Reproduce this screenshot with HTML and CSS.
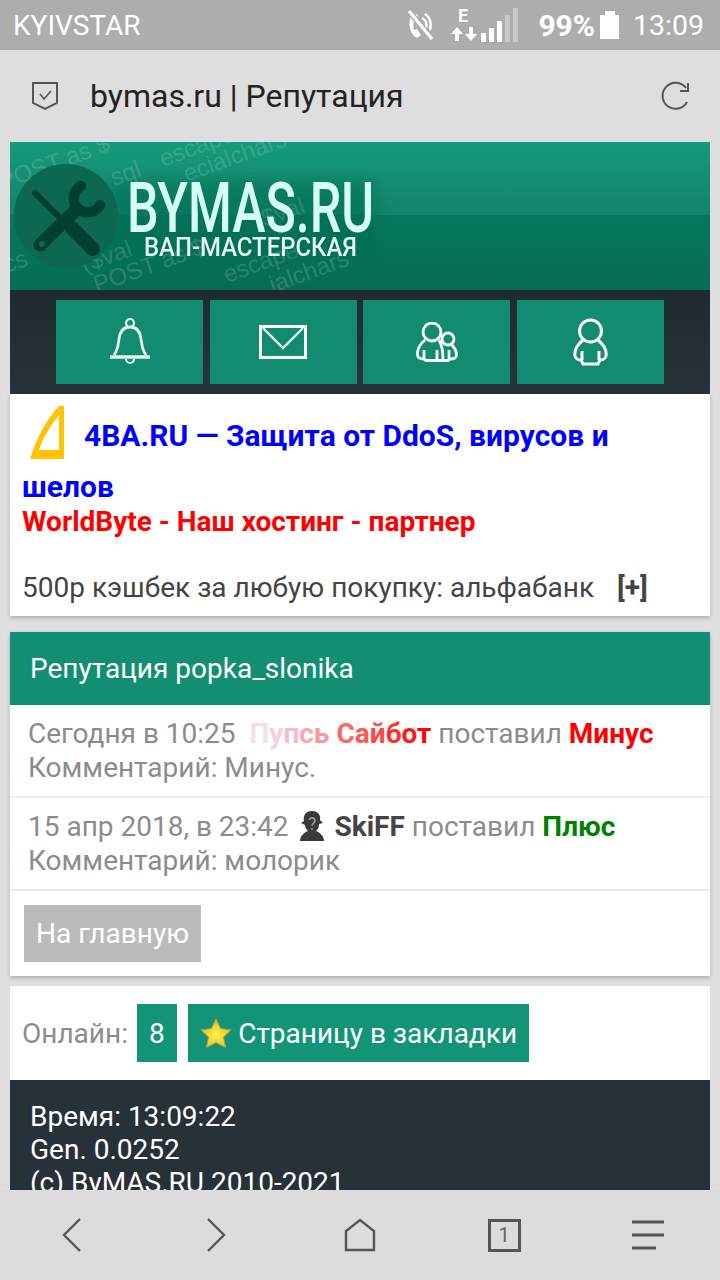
FILE: index.html
```html
<!DOCTYPE html>
<html lang="en">

<head>
    <meta charset="UTF-8">
    <meta name="viewport" content="width=device-width, initial-scale=1.0">
    <title>bymas.ru | Репутация</title>
    <link rel="stylesheet" href="styles.css">
</head>

<body>
    <div id="app">
        <div id="statusbar">
            <div class="carrier">KYIVSTAR</div>
            <div class="status-right">
                <svg class="st-mute" width="30" height="32" viewBox="0 0 30 32">
                    <path d="M8 5 C3 9 3 20 9 27 L12 29 L16 26 L12 20 L9 21 C8 18 8 14 9 12 L12 12 L13 6 L9 4 Z" fill="#fff"/>
                    <path d="M17 9 C21 11 22 15 21 19 M20 5 C25 8 27 15 25 21" fill="none" stroke="#fff" stroke-width="2.5"/>
                    <path d="M4 2 L27 30" stroke="#adadad" stroke-width="6"/>
                    <path d="M4 2 L27 30" stroke="#fff" stroke-width="3"/>
                </svg>
                <svg class="st-signal" width="68" height="36" viewBox="0 0 68 36">
                    <text x="8" y="15" class="st-e">E</text>
                    <path d="M7 20 L1 27 H5 V34 H9 V27 H13 Z M21 34 L15 27 H19 V20 H23 V27 H27 Z" fill="#fff"/>
                    <rect x="31" y="26" width="5" height="9" fill="#fff"/>
                    <rect x="39" y="21" width="5" height="14" fill="#fff"/>
                    <rect x="47" y="14" width="5" height="21" fill="#fff"/>
                    <rect x="55" y="8" width="5" height="27" fill="#c8c8c8"/>
                    <rect x="63" y="1" width="5" height="34" fill="#c8c8c8"/>
                </svg>
                <div class="battery-pct">99%</div>
                <div class="battery"><div class="battery-cap"></div><div class="battery-body"></div></div>
                <div class="clock">13:09</div>
            </div>
        </div>

        <div id="toolbar">
            <svg width="28" height="30" viewBox="0 0 28 30">
                <path d="M2 2 H26 V22 L14 28 L2 22 Z" fill="none" stroke="#555" stroke-width="2"/>
                <path d="M9 13 L13 18 L20 10" fill="none" stroke="#555" stroke-width="1.6"/>
            </svg>
            <div class="page-title">bymas.ru | Репутация</div>
            <svg width="32" height="32" viewBox="0 0 32 32">
                <path d="M27 22 A13 13 0 1 1 26 8" fill="none" stroke="#555" stroke-width="2"/>
                <path d="M28 3 V11 H20" fill="none" stroke="#555" stroke-width="2"/>
            </svg>
        </div>

        <div id="content">
            <svg class="logo" width="700" height="148" viewBox="0 0 700 148">
                <defs>
                    <linearGradient id="logobg" x1="0" y1="0" x2="0" y2="1">
                        <stop offset="0" stop-color="#169a7a"/>
                        <stop offset="0.49" stop-color="#13836c"/>
                        <stop offset="0.49" stop-color="#06785d"/>
                        <stop offset="1" stop-color="#066d55"/>
                    </linearGradient>
                    <filter id="soft"><feGaussianBlur stdDeviation="0.6"/></filter>
                    <filter id="shade"><feGaussianBlur stdDeviation="8"/></filter>
                </defs>
                <rect width="700" height="148" fill="url(#logobg)"/>
                <rect x="100" y="38" width="265" height="78" fill="#066d55" opacity="0.55" filter="url(#shade)"/>
                <g class="logo-mark" filter="url(#soft)">
                    <text transform="translate(-8 48) rotate(-20)">POST as $</text>
                    <text transform="translate(153 25) rotate(-20)">escape</text>
                    <text transform="translate(177 40) rotate(-20)">ecialchars</text>
                    <text transform="translate(104 44) rotate(-20)">sql</text>
                    <text transform="translate(75 131) rotate(-20)">($val</text>
                    <text transform="translate(87 151) rotate(-20)">POST as $</text>
                    <text transform="translate(217 141) rotate(-20)">escape</text>
                    <text transform="translate(263 151) rotate(-20)">ialchars</text>
                    <text transform="translate(-3 131) rotate(-20)">cs</text>
                    <text transform="translate(255 85) rotate(-20)">$val</text>
                </g>
                <g filter="url(#soft)">
                    <circle cx="56" cy="74" r="52" fill="#0b6751"/>
                    <path d="M25 51 L62 88" stroke="#063f30" stroke-width="6" stroke-linecap="round"/>
                    <path d="M62 86 L83 107" stroke="#063f30" stroke-width="14" stroke-linecap="round"/>
                    <path d="M30 103 L66 68" stroke="#063f30" stroke-width="13" stroke-linecap="round"/>
                    <path d="M71 44 A14 14 0 1 0 90 63" fill="none" stroke="#063f30" stroke-width="10" stroke-linecap="round"/>
                    <circle cx="32" cy="102" r="3" fill="#0b6751"/>
                    <text class="logo-title" x="117" y="90" textLength="247" lengthAdjust="spacingAndGlyphs">BYMAS.RU</text>
                    <text class="logo-sub" x="134" y="114" textLength="213" lengthAdjust="spacingAndGlyphs">ВАП-МАСТЕРСКАЯ</text>
                </g>
            </svg>

            <div class="top-nav">
                <div class="top-nav-btn">
                    <svg width="40" height="48" viewBox="0 0 40 48">
                        <g fill="none" stroke="#e8f3ef">
                            <circle cx="20" cy="5" r="4" stroke-width="2.200"/>
                            <path d="M4 37 C8 32 8 27 9 21 C10 13 14 9 20 9 C26 9 30 13 31 21 C32 27 32 32 36 37" stroke-width="2.800"/>
                            <path d="M0 39 H40" stroke-width="3.500"/>
                            <path d="M16 41 A4 4 0 0 0 24 41" stroke-width="2.200"/>
                        </g>
                    </svg>
                </div>
                <div class="top-nav-btn">
                    <svg width="48" height="34" viewBox="0 0 48 34">
                        <rect x="1.500" y="1.500" width="45" height="31" fill="none" stroke="#fff" stroke-width="3"/>
                        <path d="M4 3 L24 23 L44 3" fill="none" stroke="#e8f3ef" stroke-width="2.400"/>
                    </svg>
                </div>
                <div class="top-nav-btn">
                    <svg width="42" height="40" viewBox="0 0 42 40">
                        <g fill="none" stroke="#fff" stroke-width="2.800">
                            <circle cx="16" cy="10" r="9"/>
                            <circle cx="32" cy="17" r="6"/>
                            <path d="M9 18 C4 22 1 27 1.500 33 C2 36 5 37 8 37 L10 38.500 H32 L34 37 C38 37 41 36 40.500 32 C40 28 38 25 36 23"/>
                            <path d="M23 18 C26 23 27 27 27 37"/>
                            <path d="M8 28 V37 M21 28 V37 M33 28 V37"/>
                        </g>
                    </svg>
                </div>
                <div class="top-nav-btn">
                    <svg width="35" height="48" viewBox="0 0 35 48">
                        <g fill="none" stroke="#fff" stroke-width="3">
                            <circle cx="17.500" cy="13" r="11"/>
                            <path d="M10 22 C4 27 1 32 2 38 C3 42 6 42 8 42 L10 46 H25 L27 42 C29 42 32 42 33 38 C34 32 31 27 25 22"/>
                            <path d="M9 33 V42 M26 33 V42"/>
                        </g>
                    </svg>
                </div>
            </div>

            <div class="card ad-card">
                <div class="ad-line ad-blue">
                    <svg class="ad-logo" width="34" height="53" viewBox="0 0 34 53">
                        <path d="M29 0 H34 V53 H0 C6 34 15 15 29 0 Z M29 9 C20 20 13 32 9 44 H29 Z" fill="#ffc400" fill-rule="evenodd"/>
                    </svg>4BA.RU — Защита от DdoS, вирусов и шелов
                </div>
                <div class="ad-line ad-red">WorldByte - Наш хостинг - партнер</div>
                <div class="ad-cashback">
                    <span>500р кэшбек за любую покупку: альфабанк</span>
                    <b class="ad-more">[+]</b>
                </div>
            </div>

            <div class="card rep-card">
                <div class="rep-title">Репутация popka_slonika</div>
                <div class="rep-row">
                    Сегодня в 10:25 &nbsp;<b class="nick-fade"><span class="c1">П</span><span class="c2">у</span><span class="c3">п</span><span class="c4">с</span><span class="c5">ь</span> <span class="c6">С</span><span class="c7">а</span><span class="c8">й</span><span class="c9">б</span><span class="c10">о</span><span class="c11">т</span></b> поставил <b class="minus">Минус</b><br>
                    Комментарий: Минус.
                </div>
                <div class="rep-row">
                    15 апр 2018, в 23:42
                    <svg class="avatar" width="32" height="32" viewBox="0 0 30 32">
                        <path d="M15 1 C8 1 6 6 7 11 L4 13 L8 15 C8 18 10 20 11 21 C6 23 3 27 3 31 H27 C27 27 24 23 19 21 C21 19 22 17 22 14 L26 13 L23 10 C24 5 21 1 15 1 Z" fill="#3a3a3a"/>
                        <path d="M12 10 C13 7 18 7 18 11 C18 13 15 13 15 16 M15 18 V20" fill="none" stroke="#999" stroke-width="1.600"/>
                    </svg>
                    <b class="nick">SkiFF</b> поставил <b class="plus">Плюс</b><br>
                    Комментарий: молорик
                </div>
                <div class="rep-actions"><div class="btn-grey">На главную</div></div>
            </div>

            <div class="card online-card">
                <span class="online-label">Онлайн:</span>
                <div class="btn-green">8</div>
                <div class="btn-green">
                    <svg width="32" height="30" viewBox="0 0 32 30">
                        <defs>
                            <radialGradient id="star" cx="0.5" cy="0.55" r="0.55">
                                <stop offset="0" stop-color="#fff24a"/>
                                <stop offset="1" stop-color="#e3bd1c"/>
                            </radialGradient>
                        </defs>
                        <path d="M16 1 L20.500 10.500 L31 12 L23.500 19 L25.500 29.500 L16 24.500 L6.500 29.500 L8.500 19 L1 12 L11.500 10.500 Z" fill="url(#star)" stroke="#a8a055" stroke-width="1"/>
                    </svg>
                    Страницу в закладки
                </div>
            </div>

            <div class="footer">
                Время: 13:09:22<br>
                Gen. 0.0252<br>
                (c) ByMAS.RU 2010-2021
            </div>
        </div>

        <div id="bottombar">
            <div class="bottom-item"><svg width="24" height="36" viewBox="0 0 24 36"><path d="M20 2 L4 18 L20 34" fill="none" stroke="#555" stroke-width="2.400"/></svg></div>
            <div class="bottom-item"><svg width="24" height="36" viewBox="0 0 24 36"><path d="M4 2 L20 18 L4 34" fill="none" stroke="#555" stroke-width="2.400"/></svg></div>
            <div class="bottom-item"><svg width="32" height="34" viewBox="0 0 32 34"><path d="M2 32 V13 L16 2 L30 13 V32 Z" fill="none" stroke="#555" stroke-width="2.400"/></svg></div>
            <div class="bottom-item"><div class="tab-count">1</div></div>
            <div class="bottom-item">
                <svg width="34" height="32" viewBox="0 0 34 32">
                    <path d="M1 3 H33 M1 16 H33 M1 29 H25" stroke="#555" stroke-width="3"/>
                </svg>
            </div>
        </div>
    </div>
</body>

</html>
```

FILE: styles.css
```css
body,
html {
    margin: 0;
    padding: 0;
    height: 100%;
    overflow: hidden;
    font-family: Roboto, Arial, sans-serif;
}

#app {
    display: flex;
    flex-direction: column;
    height: 100%;
    background-color: #dfdfdf;
}

#statusbar {
    height: 50px;
    flex: none;
    background-color: #adadad;
    color: #fff;
    display: flex;
    justify-content: space-between;
    align-items: center;
    padding: 0 16px 0 13px;
    font-size: 28px;
}

.status-right {
    display: flex;
    align-items: center;
}

.st-mute {
    margin-right: 15px;
}

.st-signal {
    margin-right: 20px;
}

.st-e {
    font-size: 18px;
    font-weight: 700;
    fill: #fff;
}

.battery-pct {
    font-size: 30px;
    font-weight: 700;
}

.battery {
    margin: 0 14px 0 5px;
    display: flex;
    flex-direction: column;
    align-items: center;
}

.battery-cap {
    width: 10px;
    height: 4px;
    background-color: #fff;
}

.battery-body {
    width: 19px;
    height: 24px;
    background-color: #fff;
}

.clock {
    font-size: 28.5px;
}

#toolbar {
    height: 92px;
    flex: none;
    background-color: #dedede;
    display: flex;
    align-items: center;
    padding: 0 28px 0 31px;
    box-sizing: border-box;
}

.page-title {
    flex-grow: 1;
    margin-left: 31px;
    font-size: 32px;
    color: #222;
}

#content {
    flex-grow: 1;
    min-height: 0;
    overflow: hidden;
    padding: 0 10px;
}

.logo {
    display: block;
}

.logo-mark text {
    font-family: "Liberation Sans", Arial, sans-serif;
    font-size: 24px;
    fill: #fff;
    opacity: 0.14;
}

.logo-title {
    font-family: Roboto, Arial, sans-serif;
    font-size: 70px;
    font-weight: 500;
    fill: #d5fff2;
}

.logo-sub {
    font-family: Roboto, Arial, sans-serif;
    font-size: 26px;
    font-weight: 500;
    fill: #e6f5ef;
}

.top-nav {
    height: 104px;
    background: linear-gradient(#1f2a30, #29333a);
    display: flex;
    justify-content: center;
    align-items: center;
    gap: 6.67px;
}

.top-nav-btn {
    width: 147px;
    height: 84px;
    background-color: #128c70;
    display: flex;
    justify-content: center;
    align-items: center;
}

.card {
    background-color: #fff;
    box-shadow: 0 2px 4px rgba(0, 0, 0, 0.22);
}

.ad-card {
    height: 222px;
    padding: 4px 12px 0;
    box-sizing: border-box;
    margin-bottom: 16px;
    font-size: 28px;
    line-height: 35px;
}

.ad-line {
    font-weight: 700;
}

.ad-blue {
    color: #0000ff;
    font-size: 30px;
}

.ad-logo {
    vertical-align: -23px;
    margin: 8px 20px 10px 8px;
}

.ad-red {
    color: #ff0000;
}

.ad-cashback {
    margin-top: 31px;
    color: #444;
    display: flex;
    gap: 23px;
}

.ad-more {
    color: #444;
}

.rep-card {
    margin-bottom: 10px;
}

.rep-title {
    height: 73px;
    background-color: #128f73;
    color: #fff;
    font-size: 28px;
    display: flex;
    align-items: center;
    padding-left: 20px;
}

.rep-row {
    padding: 12px 18px;
    font-size: 28px;
    line-height: 33.5px;
    color: #8c8c8c;
    border-bottom: 2px solid #ececec;
}

.avatar {
    vertical-align: -6px;
}

.nick-fade .c1 { color: #f4dfe6; }
.nick-fade .c2 { color: #f6cfd8; }
.nick-fade .c3 { color: #f8bcc6; }
.nick-fade .c4 { color: #faa8b0; }
.nick-fade .c5 { color: #fc959c; }
.nick-fade .c6 { color: #ff6666; }
.nick-fade .c7 { color: #ff5858; }
.nick-fade .c8 { color: #ff4848; }
.nick-fade .c9 { color: #ff3030; }
.nick-fade .c10 { color: #ff1818; }
.nick-fade .c11 { color: #ff0000; }

.nick {
    color: #444;
}

.minus {
    color: #ff0000;
}

.plus {
    color: #008000;
}

.rep-actions {
    padding: 14px;
}

.btn-grey {
    display: inline-block;
    background-color: #bbb;
    color: #fff;
    font-size: 28px;
    line-height: 57px;
    padding: 0 12px;
}

.online-card {
    height: 94px;
    display: flex;
    align-items: center;
    padding-left: 12px;
    box-sizing: border-box;
    font-size: 28px;
    box-shadow: none;
}

.online-label {
    color: #8c8c8c;
    margin-right: 9px;
}

.btn-green {
    height: 58px;
    background-color: #149476;
    color: #fff;
    display: flex;
    align-items: center;
    gap: 6.5px;
    padding: 0 12px;
    margin-right: 11px;
}

.footer {
    background-color: #263138;
    color: #fff;
    font-size: 28px;
    line-height: 33px;
    padding: 20px 20px 30px;
}

#bottombar {
    height: 90px;
    flex: none;
    background-color: #dcdcdc;
    display: flex;
    align-items: center;
}

.bottom-item {
    flex: 1;
    display: flex;
    justify-content: center;
}

.tab-count {
    width: 27px;
    height: 27px;
    border: 3px solid #555;
    color: #666;
    font-size: 20px;
    text-align: center;
    line-height: 27px;
}
```
